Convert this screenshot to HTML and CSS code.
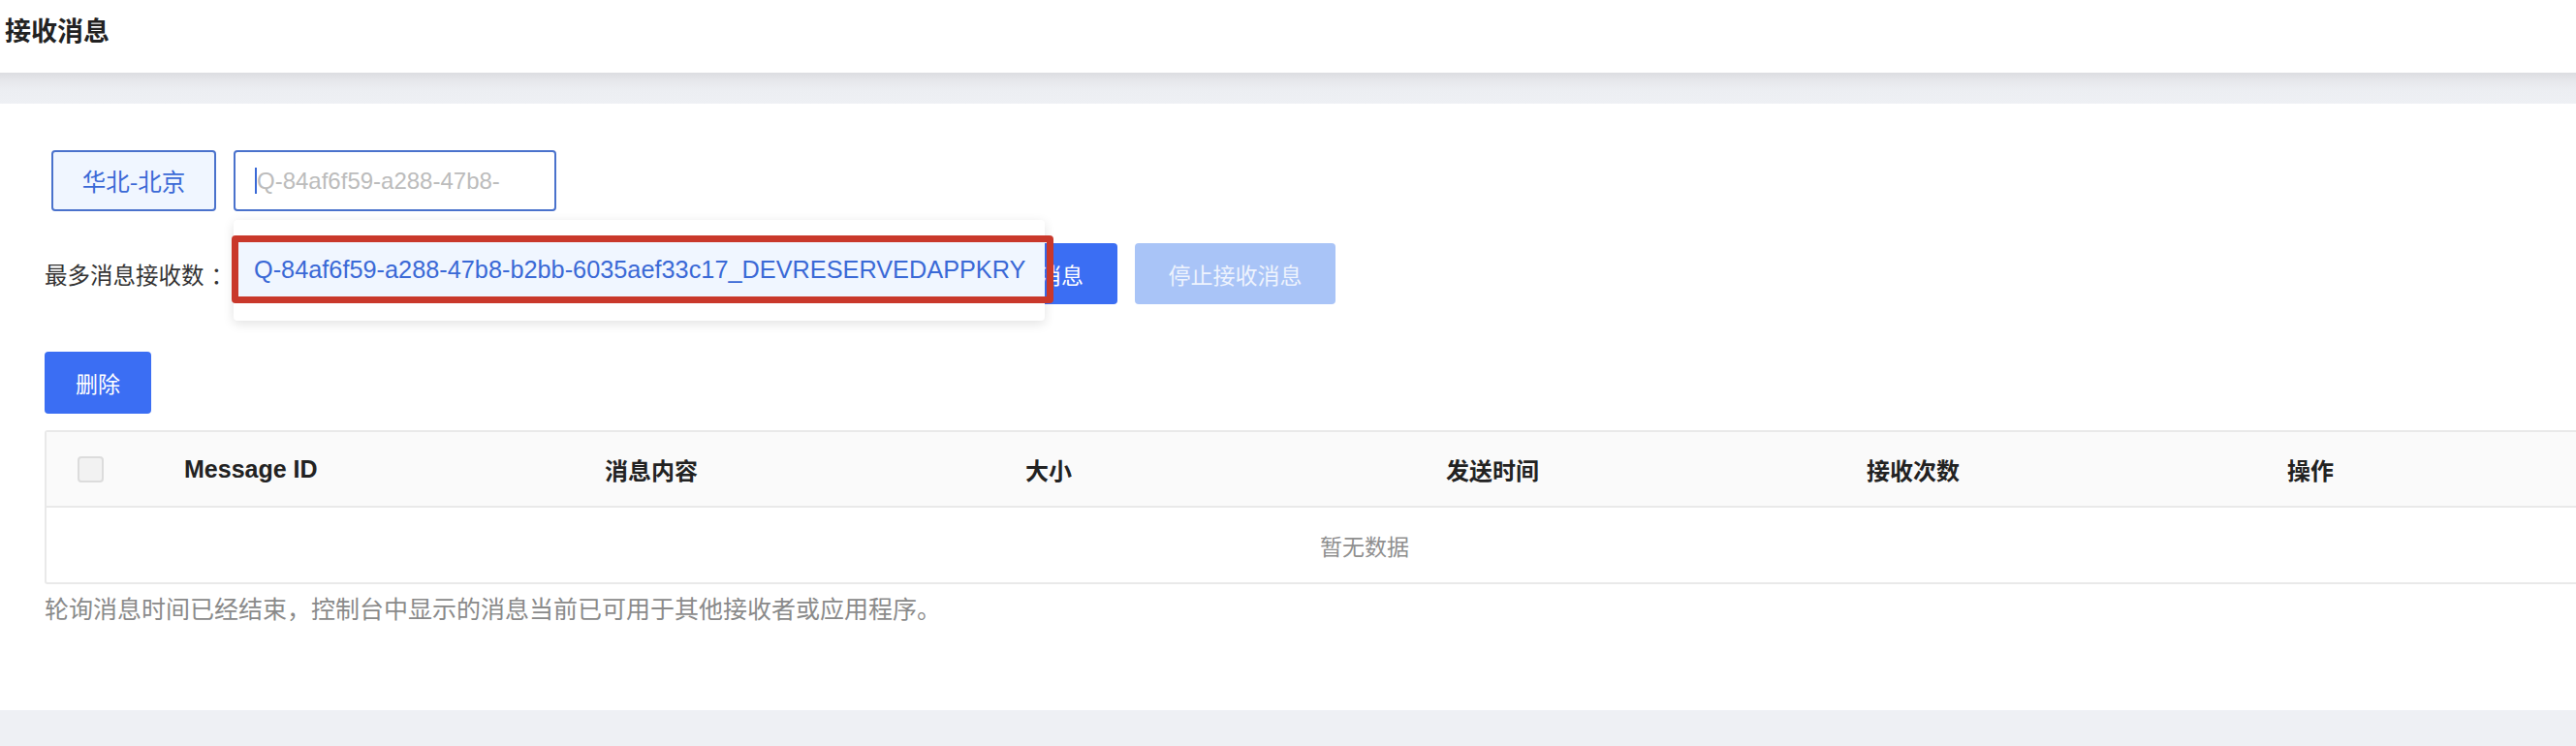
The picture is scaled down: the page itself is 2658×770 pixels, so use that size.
FILE: index.html
```html
<!DOCTYPE html>
<html lang="zh-CN">
<head>
<meta charset="utf-8">
<title>接收消息</title>
<link rel="stylesheet" href="styles.css">
</head>
<body>
<div class="page">
  <header class="topbar"><h1 class="title">接收消息</h1></header>
  <div class="band"></div>
  <main class="card">
    <div class="row row-region">
      <button class="btn-region">华北-北京</button>
      <div class="queue-wrap">
        <div class="queue-input"><span class="caret"></span><span class="ph">Q-84af6f59-a288-47b8-</span></div>
        <div class="dropdown">
          <div class="dd-item">Q-84af6f59-a288-47b8-b2bb-6035aef33c17_DEVRESERVEDAPPKRY<span class="mark"></span></div>
        </div>
      </div>
    </div>
    <div class="row row-recv">
      <span class="label">最多消息接收数<span class="colon">：</span></span>
      <div class="num-input"></div>
      <button class="btn btn-primary btn-start">开始接收消息</button>
      <button class="btn btn-disabled">停止接收消息</button>
    </div>
    <div class="row row-del">
      <button class="btn btn-primary btn-del">删除</button>
    </div>
    <div class="table">
      <div class="thead">
        <div class="cell cell-check"><span class="checkbox"></span></div>
        <div class="cell cell-latin">Message ID</div>
        <div class="cell">消息内容</div>
        <div class="cell">大小</div>
        <div class="cell">发送时间</div>
        <div class="cell">接收次数</div>
        <div class="cell">操作</div>
      </div>
      <div class="empty">暂无数据</div>
    </div>
    <p class="note">轮询消息时间已经结束，控制台中显示的消息当前已可用于其他接收者或应用程序。</p>
  </main>
  <div class="band band-bottom"></div>
</div>
</body>
</html>
```

FILE: styles.css
```css
* { box-sizing: border-box; }
html, body { margin: 0; padding: 0; }
body {
  width: 2658px;
  height: 770px;
  overflow: hidden;
  background: #ffffff;
  font-family: "Liberation Sans", "Noto Sans CJK SC", sans-serif;
  font-size: 23px;
  color: #333;
}
.page { display: flex; flex-direction: column; width: 2658px; }
.topbar {
  height: 75px;
  padding: 12px 0 0 5px;
  background: #fff;
}
.title {
  margin: 0;
  font-size: 27px;
  line-height: 37px;
  font-weight: 700;
  color: #222;
  font-family: "Noto Sans CJK SC", sans-serif;
}
.band {
  height: 32px;
  background: linear-gradient(#dcdde1 0px, #e6e7eb 8px, #eceef2 18px, #eef0f4 32px);
}
.band-bottom {
  height: 37px;
  background: #eef0f4;
}
.card {
  height: 626px;
  background: #fff;
  padding: 48px 0 0 46px;
  display: flex;
  flex-direction: column;
}
.row { display: flex; align-items: center; }
.row-region { height: 63px; gap: 18px; padding-left: 7px; }
.btn-region {
  width: 170px;
  height: 63px;
  border: 2px solid #4a72cc;
  border-radius: 4px;
  background: #f0f6ff;
  color: #3a69d6;
  font-size: 24.5px;
  font-family: "Noto Sans CJK SC", sans-serif;
  padding: 0;
}
.queue-wrap { position: relative; }
.queue-input {
  width: 333px;
  height: 63px;
  border: 2px solid #4a72cc;
  border-radius: 4px;
  display: flex;
  align-items: center;
  padding-left: 20px;
  color: #bcbcbc;
  font-size: 24px;
}
.caret { width: 2px; height: 27px; background: #3a69d6; }
.dropdown {
  position: absolute;
  left: 0;
  top: 72px;
  width: 837px;
  height: 104px;
  background: #fff;
  border-radius: 4px;
  box-shadow: 0 3px 12px rgba(0,0,0,0.12);
  padding-top: 18px;
  z-index: 5;
}
.dd-item {
  position: relative;
  height: 66px;
  background: #f0f6ff;
  color: #3a69d6;
  padding-left: 21px;
  display: flex;
  align-items: center;
  font-size: 25.3px;
  white-space: nowrap;
}
.mark {
  position: absolute;
  left: -2px;
  top: -2px;
  right: -9px;
  bottom: -2px;
  border: 7px solid #c9382b;
  border-radius: 4px;
}
.row-recv { height: 63px; margin-top: 33px; }
.label {
  font-family: "Noto Sans CJK SC", sans-serif;
  font-size: 23.5px;
  color: #333;
  width: 195px;
  white-space: nowrap;
}
.colon { margin-left: 7px; }
.num-input {
  width: 690px;
  height: 63px;
  border: 2px solid #d9d9d9;
  border-radius: 4px;
  margin-right: 14px;
}
.btn {
  height: 63px;
  border: none;
  border-radius: 4px;
  font-size: 23px;
  font-family: "Noto Sans CJK SC", sans-serif;
  color: #fff;
  padding: 0;
}
.btn-primary { background: #3b6ef3; }
.btn-start { width: 208px; }
.btn-disabled { width: 207px; margin-left: 18px; background: #a9c4f7; color: #eef3fd; }
.row-del { margin-top: 49px; height: 64px; }
.btn-del { width: 110px; height: 64px; }
.table {
  margin-top: 17px;
  width: 2724px;
  border: 2px solid #e9e9e9;
  border-radius: 3px;
}
.thead {
  display: grid;
  grid-template-columns: 120px repeat(6, 434px);
  height: 78px;
  background: #fafafa;
  border-bottom: 2px solid #e9e9e9;
  font-weight: 700;
  color: #222;
  font-size: 24px;
  font-family: "Noto Sans CJK SC", sans-serif;
}
.cell { display: flex; align-items: center; padding-left: 22px; }
.cell-latin { font-family: "Liberation Sans", sans-serif; font-size: 25px; }
.cell-check { padding-left: 32px; }
.checkbox {
  width: 27px;
  height: 27px;
  border: 2px solid #dcdcdc;
  border-radius: 4px;
  background: #f2f2f2;
}
.empty {
  height: 77px;
  display: flex;
  align-items: center;
  justify-content: center;
  color: #8f8f8f;
  font-family: "Noto Sans CJK SC", sans-serif;
}
.note {
  margin: 8px 0 0;
  line-height: 32px;
  font-size: 25px;
  color: #8a8a8a;
  font-family: "Noto Sans CJK SC", sans-serif;
}
```
